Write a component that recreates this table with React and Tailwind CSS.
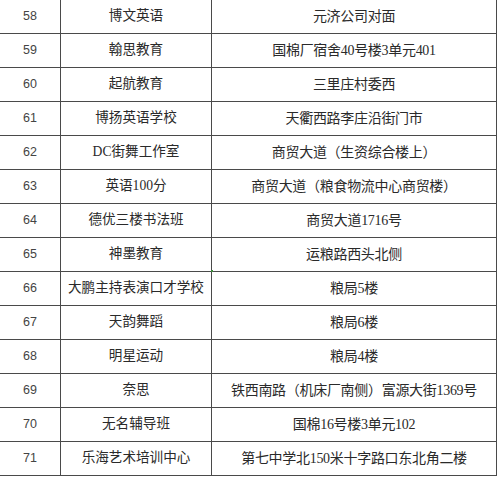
import React from 'react';

const rows = [
  ['58', '博文英语', '元济公司对面'],
  ['59', '翰思教育', '国棉厂宿舍40号楼3单元401'],
  ['60', '起航教育', '三里庄村委西'],
  ['61', '博扬英语学校', '天衢西路李庄沿街门市'],
  ['62', 'DC街舞工作室', '商贸大道（生资综合楼上）'],
  ['63', '英语100分', '商贸大道（粮食物流中心商贸楼）'],
  ['64', '德优三楼书法班', '商贸大道1716号'],
  ['65', '神墨教育', '运粮路西头北侧'],
  ['66', '大鹏主持表演口才学校', '粮局5楼'],
  ['67', '天韵舞蹈', '粮局6楼'],
  ['68', '明星运动', '粮局4楼'],
  ['69', '奈思', '铁西南路（机床厂南侧）富源大街1369号'],
  ['70', '无名辅导班', '国棉16号楼3单元102'],
  ['71', '乐海艺术培训中心', '第七中学北150米十字路口东北角二楼'],
];

const App = () => {
  return (
    <div
      className="w-[500px] h-[477px] bg-white overflow-hidden text-[#2a2a2a]"
      style={{ fontFamily: '"Liberation Serif", "Noto Sans CJK SC", serif' }}
    >
      <div className="w-[497px] border-r border-[#4a4a4a]">
        {rows.map(([no, name, addr], i) => (
          <div key={no} className="flex h-[34px] border-b border-[#4a4a4a]">
            <div
              className="w-[61px] border-r border-[#4a4a4a] flex items-center justify-center text-[12.5px] text-[#444]"
              style={{ fontFamily: '"Liberation Sans", sans-serif' }}
            >
              {no}
            </div>
            <div className="relative w-[151px] border-r border-[#4a4a4a] flex items-center justify-center text-[13.6px]">
              {name}
              {i === 7 && <span className="absolute right-[-2px] bottom-[-1px] w-[2px] h-[2px] bg-[#3a8a3a]" />}
            </div>
            <div className="flex-1 flex items-center justify-center text-[14px] tracking-[-0.3px] whitespace-nowrap">
              {addr}
            </div>
          </div>
        ))}
      </div>
    </div>
  );
};

export default App;
